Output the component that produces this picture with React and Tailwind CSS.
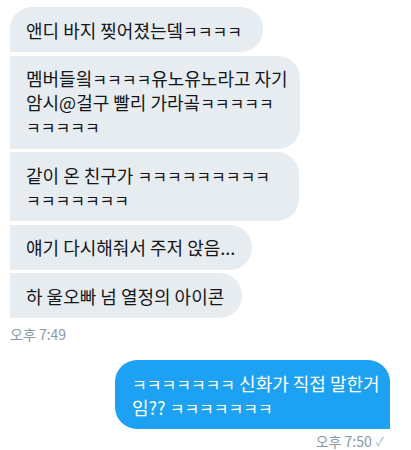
import React from "react";

const font = { fontFamily: '"Noto Sans CJK KR", "Noto Sans", sans-serif' };

// ㅋ runs render a touch smaller than the syllables around them
const kk = (text) =>
  text.split(/(ㅋ+)/).map((part, i) =>
    part.startsWith("ㅋ") ? (
      <span key={i} className="text-[16px]">
        {part}
      </span>
    ) : (
      <span key={i}>{part}</span>
    )
  );

const received = [
  { lines: ["앤디 바지 찢어졌는뎈ㅋㅋㅋㅋ"], w: "w-[253px]", first: true },
  { lines: ["멤버들읰ㅋㅋㅋㅋ유노유노라고 자기", "암시@걸구 빨리 가라곸ㅋㅋㅋㅋㅋ", "ㅋㅋㅋㅋㅋ"], w: "w-[290px]" },
  { lines: ["같이 온 친구가 ㅋㅋㅋㅋㅋㅋㅋㅋㅋ", "ㅋㅋㅋㅋㅋㅋㅋ"], w: "w-[289px]" },
  { lines: ["얘기 다시해줘서 주저 앉음..."], w: "w-[242px]" },
  { lines: ["하 울오빠 넘 열정의 아이콘"], w: "w-[232px]" },
];

export default function App() {
  return (
    <div className="w-[411px] h-[450px] bg-white overflow-hidden pt-[7px]" style={font}>
      <div className="flex flex-col gap-[3.5px] pl-[10px]">
        {received.map((m, i) => (
          <div
            key={i}
            className={`${m.w} bg-[#e6ecf0] text-[#14171a] text-[18px] leading-[24px] px-[16px] py-[10.5px] whitespace-nowrap rounded-r-[22px] ${
              m.first ? "rounded-tl-[22px]" : ""
            }`}
          >
            {m.lines.map((l, j) => (
              <div key={j} className="h-[24px]">{kk(l)}</div>
            ))}
          </div>
        ))}
      </div>
      <div className="pl-[10px] mt-[7px] text-[14px] leading-[18px] text-[#8899a6]">오후 7:49</div>

      <div className="flex justify-end pr-[21px] mt-[17px]">
        <div className="w-[275px] bg-[#1da1f2] text-white text-[18px] leading-[24px] pl-[17px] pr-[8px] py-[10.5px] whitespace-nowrap rounded-l-[22px] rounded-tr-[22px]">
          <div className="h-[24px]">{kk("ㅋㅋㅋㅋㅋㅋㅋ 신화가 직접 말한거")}</div>
          <div className="h-[24px]">{kk("임?? ㅋㅋㅋㅋㅋㅋㅋ")}</div>
        </div>
      </div>
      <div className="flex justify-end items-center gap-[4px] pr-[27px] mt-[3px] text-[14px] leading-[18px] text-[#8899a6]">
        <span>오후 7:50</span>
        <span className="text-[12px] text-[#aab8c2]">✓</span>
      </div>
    </div>
  );
}
